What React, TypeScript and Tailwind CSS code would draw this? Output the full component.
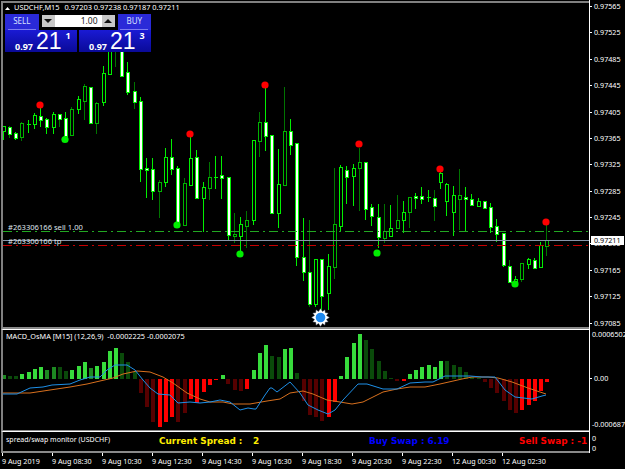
type Candle = [number, number, number, number, number, string];

// x, high, low, body top, body bottom, kind (w/W white body, h/H hollow; capital = dark wick)
const candles: Candle[] = [
  [3, 126, 140, 126, 131, "h"], [9, 126, 138, 127, 134, "W"], [15, 132, 140, 133, 138, "w"], [21, 122, 141, 123, 137, "H"],
  [28, 120, 133, 124, 124, "h"], [34, 113, 129, 115, 124, "h"], [40, 107, 127, 116, 120, "w"], [46, 118, 134, 119, 127, "w"],
  [53, 112, 134, 114, 127, "h"], [59, 114, 127, 114, 119, "W"], [65, 112, 140, 118, 136, "w"], [71, 107, 135, 109, 135, "H"],
  [78, 96, 114, 99, 109, "h"], [84, 84, 120, 86, 101, "H"], [90, 87, 124, 87, 123, "w"], [96, 102, 134, 103, 123, "H"],
  [103, 66, 106, 73, 102, "h"], [109, 42, 74, 46, 74, "h"], [115, 45, 67, 45, 45, "W"], [121, 40, 76, 42, 76, "w"],
  [127, 62, 95, 72, 92, "w"], [134, 82, 109, 91, 102, "W"], [140, 97, 182, 101, 169, "w"], [146, 158, 198, 168, 170, "w"],
  [152, 158, 200, 169, 191, "w"], [159, 180, 218, 182, 191, "H"], [165, 148, 187, 157, 182, "h"], [171, 139, 175, 157, 169, "w"],
  [177, 166, 224, 168, 224, "w"], [184, 178, 225, 183, 225, "H"], [190, 136, 185, 158, 185, "h"], [196, 150, 198, 157, 198, "w"],
  [203, 182, 232, 187, 198, "h"], [209, 162, 200, 177, 188, "H"], [215, 156, 189, 177, 177, "h"], [221, 156, 199, 175, 178, "w"],
  [228, 177, 240, 177, 235, "w"], [234, 213, 243, 234, 236, "H"], [240, 217, 253, 224, 236, "h"], [246, 211, 248, 220, 226, "H"],
  [253, 140, 225, 140, 220, "h"], [259, 112, 157, 122, 141, "H"], [265, 88, 151, 122, 136, "w"], [271, 135, 214, 135, 213, "w"],
  [278, 149, 228, 184, 213, "h"], [284, 87, 185, 131, 185, "H"], [290, 119, 155, 131, 145, "w"], [296, 143, 266, 143, 257, "w"],
  [303, 218, 281, 257, 272, "w"], [309, 220, 307, 272, 304, "W"], [315, 259, 307, 259, 304, "h"], [321, 259, 312, 259, 296, "w"],
  [328, 254, 310, 266, 293, "h"], [334, 168, 279, 224, 267, "H"], [340, 165, 231, 167, 226, "h"], [346, 166, 204, 170, 177, "w"],
  [353, 164, 206, 168, 176, "h"], [359, 148, 211, 162, 168, "H"], [365, 162, 220, 162, 209, "w"], [371, 204, 226, 207, 216, "w"],
  [378, 204, 248, 217, 237, "w"], [384, 204, 243, 231, 238, "H"], [390, 205, 236, 228, 236, "h"], [397, 195, 228, 220, 228, "H"],
  [403, 201, 233, 212, 220, "h"], [409, 197, 228, 197, 212, "H"], [415, 193, 209, 196, 198, "w"], [421, 187, 204, 196, 199, "w"],
  [428, 190, 202, 197, 197, "h"], [434, 190, 221, 198, 206, "W"], [440, 172, 189, 173, 182, "h"], [446, 183, 216, 184, 201, "h"],
  [453, 186, 236, 195, 212, "h"], [459, 169, 230, 195, 199, "H"], [465, 187, 232, 197, 199, "w"], [471, 194, 206, 199, 205, "w"],
  [478, 198, 206, 201, 206, "h"], [484, 201, 208, 201, 208, "w"], [490, 203, 233, 207, 227, "w"], [496, 219, 242, 226, 234, "w"],
  [503, 233, 267, 233, 265, "w"], [509, 260, 283, 266, 282, "W"], [515, 276, 284, 279, 283, "h"], [521, 263, 282, 263, 279, "H"],
  [528, 258, 269, 259, 264, "h"], [534, 258, 269, 260, 268, "w"], [540, 242, 267, 245, 267, "h"], [546, 225, 256, 240, 246, "H"],
];

const redDots = [[40, 105], [190, 134], [265, 85], [359, 144], [440, 169], [546, 222]];
const greenDots = [[65, 139.5], [177, 225], [240, 254], [377, 253], [515, 284]];

// x, bar end (y from the top of the page), colour kind
const hist: [number, number, string][] = [
  [3, 375, "m"], [9, 376, "d"], [15, 376, "d"], [21, 374, "g"], [28, 372, "g"], [34, 369, "g"], [40, 367, "g"], [46, 370, "m"],
  [53, 367, "m"], [59, 367, "d"], [65, 371, "d"], [71, 370, "g"], [78, 366, "g"], [84, 362, "g"], [90, 368, "m"], [96, 366, "g"],
  [103, 362, "g"], [109, 351, "g"], [115, 348, "g"], [121, 353, "d"], [127, 362, "d"], [134, 372, "d"],
  [140, 393, "R"], [146, 407, "R"], [152, 422, "R"], [159, 427, "r"], [165, 422, "r"], [171, 417, "r"], [177, 422, "R"], [184, 413, "R"],
  [190, 399, "r"], [196, 403, "r"], [203, 392, "r"], [209, 385, "r"], [215, 380, "r"], [222, 375, "g"], [227, 384, "R"], [234, 390, "R"],
  [240, 391, "R"], [246, 389, "r"], [253, 370, "g"], [259, 353, "g"], [265, 345, "g"], [271, 356, "d"], [278, 357, "d"], [284, 349, "g"],
  [290, 348, "g"], [296, 373, "d"], [303, 401, "R"], [309, 415, "R"], [315, 417, "R"], [321, 421, "R"], [328, 417, "r"], [334, 402, "r"],
  [340, 376, "g"], [346, 357, "g"], [353, 343, "g"], [359, 334, "g"], [365, 340, "d"], [371, 349, "d"], [378, 361, "d"], [384, 371, "d"],
  [390, 378, "d"], [396, 381, "R"], [403, 381, "r"], [409, 374, "g"], [415, 370, "g"], [421, 367, "g"], [428, 365, "g"], [434, 367, "g"],
  [440, 361, "g"], [446, 361, "d"], [453, 365, "d"], [459, 367, "d"], [465, 372, "d"], [471, 377, "d"], [478, 378, "d"], [484, 382, "R"],
  [490, 388, "R"], [496, 393, "R"], [503, 401, "R"], [509, 410, "R"], [515, 413, "R"], [521, 410, "r"], [528, 405, "r"], [534, 401, "r"],
  [540, 391, "r"], [546, 382, "r"],
];

const histColor: Record<string, string> = { g: "#37dc3c", m: "#1d8a22", d: "#0a4a0a", r: "#ff0000", R: "#560000" };

const macdBlue =
  "3,394 17,394 30,388 43,387 52,385 70,384 80,380 90,377 100,377 107,370 115,365 127,365 135,370 143,380 150,388 158,394 170,395 178,403 190,402 200,403 210,402 220,400 230,402 240,410 248,408 254,409 256,409 265,395 270,388 272,388 277,392 290,382 300,393 308,405 318,410 328,414 335,410 343,400 358,384 367,384 383,389 397,389 410,383 425,382 433,382 445,376 470,376 482,377 495,377 505,390 515,397 532,399 542,396 546,395";

const macdOrange =
  "3,393 17,393 30,393 50,390 70,387 87,384 113,378 123,374 137,371 150,372 163,377 173,383 187,393 200,399 210,402 223,402 233,404 250,404 267,401 280,399 290,393 303,391 313,394 327,400 340,402 352,404 363,402 383,392 397,389 410,387 425,387 440,384 462,379 472,377 488,377 498,378 512,382 528,388 546,394";

function Axis({ text }: { text: string }) {
  return (
    <div className="flex h-[11px] items-center leading-[11px]">
      <span className="h-px w-[2px] bg-white" />
      <span className="ml-[2px] whitespace-nowrap">{text}</span>
    </div>
  );
}

function MainChart() {
  return (
    <svg width={586} height={324} viewBox="3 3 586 324" className="block">
      {candles.map(([x, hi, lo, top, bot, kind], i) => {
        const cx = x + 0.5;
        const dark = kind === "W" || kind === "H";
        const white = kind === "w" || kind === "W";
        return (
          <g key={i} shapeRendering="crispEdges">
            <line x1={cx} x2={cx} y1={hi} y2={lo} stroke={dark ? "#007400" : "#00f000"} strokeWidth={1} />
            {bot - top < 1 ? (
              <line x1={x - 1.5} x2={x + 2.5} y1={top + 0.5} y2={top + 0.5} stroke="#00f000" />
            ) : (
              <rect
                x={x - 1}
                y={top + 0.5}
                width={3}
                height={bot - top}
                fill={white ? "#ffffff" : "#000000"}
                stroke={kind === "H" ? "#00b400" : "#00f000"}
                strokeWidth={1}
              />
            )}
          </g>
        );
      })}
      {redDots.map(([x, y]) => (
        <circle key={x} cx={x} cy={y} r={3.6} fill="#ff0000" />
      ))}
      {greenDots.map(([x, y]) => (
        <circle key={x} cx={x} cy={y} r={3.6} fill="#00ee00" />
      ))}
      <line x1={3} x2={589} y1={231.5} y2={231.5} stroke="#22a822" strokeDasharray="9 4 2 4" shapeRendering="crispEdges" />
      <line x1={3} x2={589} y1={245.5} y2={245.5} stroke="#c80000" strokeDasharray="9 4 2 4" shapeRendering="crispEdges" />
      <line x1={3} x2={589} y1={240.5} y2={240.5} stroke="#8796aa" shapeRendering="crispEdges" />
      {/* best-price marker */}
      <g transform="translate(320.5 317.5)">
        <polygon
          fill="#ffffff"
          stroke="#26324a"
          strokeWidth={0.4}
          points="0,-9 2,-6 4.5,-7.8 4.8,-4.8 7.8,-4.5 6,-2 9,0 6,2 7.8,4.5 4.8,4.8 4.5,7.8 2,6 0,9 -2,6 -4.5,7.8 -4.8,4.8 -7.8,4.5 -6,2 -9,0 -6,-2 -7.8,-4.5 -4.8,-4.8 -4.5,-7.8 -2,-6"
        />
        <circle r={4.8} fill="#1e88ee" />
      </g>
    </svg>
  );
}

function MacdChart() {
  return (
    <svg width={586} height={100} viewBox="3 330 586 100" className="block">
      {hist.map(([x, y, k], i) => {
        const up = y < 378.5;
        return (
          <rect
            key={i}
            x={x - 1.5}
            y={up ? y : 378.5}
            width={4}
            height={up ? 378.5 - y : y - 378.5}
            fill={histColor[k]}
            shapeRendering="crispEdges"
          />
        );
      })}
      <polyline points={macdOrange} fill="none" stroke="#d8701e" strokeWidth={1} />
      <polyline points={macdBlue} fill="none" stroke="#1e90e8" strokeWidth={1} />
    </svg>
  );
}

function PriceBox({ sup }: { sup: string }) {
  return (
    <div className="flex h-[22px] w-[72px] items-start bg-gradient-to-b from-[#1a1ad4] to-[#0a0a98] text-white">
      <span className="ml-[10px] mt-[11px] text-[9px] font-bold leading-[11px]">0.97</span>
      <span className="ml-[3px] mt-[-1px] font-['Liberation_Sans',sans-serif] text-[23px] leading-[24px]">21</span>
      <span className="ml-[4px] mt-px text-[9px] font-bold leading-[10px]">{sup}</span>
    </div>
  );
}

function TradeButton({ label }: { label: string }) {
  return (
    <div className="flex h-[16px] w-[34px] flex-col items-center bg-[#2a2ad8] text-[8px] leading-[14px] text-[#d8e0ff]">
      <span className="h-[15px]">{label}</span>
      <span className="h-px w-[28px] bg-[#7c7cf0]" />
    </div>
  );
}

function Stepper() {
  return (
    <div className="mx-[3px] flex h-[12px] w-[73px] text-[8.5px] leading-[12px] text-[#222]">
      <div className="flex w-[13px] items-center justify-center bg-[#c8c8c8]">
        <svg width={8} height={4} viewBox="0 0 8 4"><polygon points="0,0 8,0 4,4" fill="#111" /></svg>
      </div>
      <div className="w-[47px] bg-white pr-[4px] text-right">1.00</div>
      <div className="flex w-[13px] items-center justify-center bg-[#c8c8c8]">
        <svg width={8} height={4} viewBox="0 0 8 4"><polygon points="0,4 8,4 4,0" fill="#111" /></svg>
      </div>
    </div>
  );
}

export default function App() {
  const prices = ["0.97565", "0.97525", "0.97485", "0.97445", "0.97405", "0.97365", "0.97325", "0.97285", "0.97245", "0.97205", "0.97165", "0.97125", "0.97085"];
  const times = ["9 Aug 2019", "9 Aug 08:30", "9 Aug 10:30", "9 Aug 12:30", "9 Aug 14:30", "9 Aug 16:30", "9 Aug 18:30", "9 Aug 20:30", "9 Aug 22:30", "12 Aug 00:30", "12 Aug 02:30"];

  return (
    <div className="relative h-[469px] w-[625px] overflow-hidden bg-black font-['Noto_Sans',sans-serif] text-[7.2px] text-white">
      {/* price chart */}
      <div className="flex h-[329px]">
        <div className="ml-px mt-px h-[328px] w-[588px] border-b-2 border-l-2 border-t-2 border-b-[#8a8a8a] border-l-[#808080] border-t-[#808080]">
          <MainChart />
        </div>
        <div className="flex h-full w-[36px] flex-col justify-between border-l border-white pb-[0.5px] pt-px">
          {prices.map((p) => (
            <Axis key={p} text={p} />
          ))}
        </div>
      </div>

      {/* macd */}
      <div className="flex h-[102px]">
        <div className="ml-px h-full w-[588px] border-b border-l-2 border-t border-b-[#8a8a8a] border-l-[#808080] border-t-white">
          <MacdChart />
        </div>
        <div className="flex h-full w-[36px] flex-col justify-between border-l border-white pb-[1px]">
          <Axis text="0.0006502" />
          <div className="-mt-[2px]">
            <Axis text="0.00" />
          </div>
          <Axis text="-0.000687" />
        </div>
      </div>

      {/* spread / swap monitor */}
      <div className="flex h-[22px]">
        <div className="ml-px grid h-full w-[588px] grid-cols-[156px_210px_150px_70px] items-center overflow-hidden border-b-2 border-l-2 border-t border-b-[#8a8a8a] border-l-[#808080] border-t-white font-['DejaVu_Sans',sans-serif] text-[8.9px] font-bold">
          <span className="pb-[3px] pl-[3px] font-['Noto_Sans',sans-serif] text-[7px] font-normal">spread/swap monitor (USDCHF)</span>
          <span className="flex text-[#ffee00]">
            <span className="w-[94px]">Current Spread :</span>
            <span>2</span>
          </span>
          <span className="text-[#0000ff]">Buy Swap : 6.19</span>
          <span className="whitespace-nowrap text-[#ff0000]">Sell Swap : -1</span>
        </div>
        <div className="flex h-full w-[36px] flex-col justify-center border-l border-white pl-[2px] pt-[2px] text-[7.2px] leading-[10px]">
          <span>0</span>
          <span>0</span>
        </div>
      </div>

      {/* time axis */}
      <div className="flex pl-[2px]">
        {times.map((t) => (
          <div key={t} className="w-[50px] shrink-0">
            <div className="h-[3px] w-px bg-white" />
            <div className="whitespace-nowrap leading-[10px]">{t}</div>
          </div>
        ))}
      </div>

      {/* chart header */}
      <div className="absolute left-[5px] top-[3px] flex h-[10px] items-center whitespace-nowrap text-[7.4px]">
        <svg width={5} height={3} viewBox="0 0 5 3" className="mr-[4px]"><polygon points="0,3 5,3 2.5,0" fill="#fff" /></svg>
        <span>USDCHF,M15</span>
        <span className="ml-[5px]">0.97203 0.97238 0.97187 0.97211</span>
      </div>

      {/* one click trading */}
      <div className="absolute left-[5px] top-[14px] w-[146px]">
        <div className="flex items-start">
          <TradeButton label="SELL" />
          <div className="mt-px">
            <Stepper />
          </div>
          <TradeButton label="BUY" />
        </div>
        <div className="flex gap-[2px]">
          <PriceBox sup="1" />
          <PriceBox sup="3" />
        </div>
      </div>

      {/* trade labels */}
      <span className="absolute left-[8px] top-[222px] whitespace-nowrap text-[7.6px] leading-[10px] text-[#dfe3ea]">#263306166 sell 1.00</span>
      <span className="absolute left-[8px] top-[236px] whitespace-nowrap text-[7.6px] leading-[10px] text-[#dfe3ea]">#263306166 tp</span>

      {/* indicator label */}
      <span className="absolute left-[6px] top-[331px] whitespace-pre text-[7.3px] leading-[10px]">MACD_OsMA [M15] (12,26,9)  -0.0002225 -0.0002075</span>

      {/* last price tag */}
      <div className="absolute left-[591px] top-[236px] h-[9px] w-[33px] bg-white pl-[3px] leading-[9px] text-black">0.97211</div>
    </div>
  );
}
